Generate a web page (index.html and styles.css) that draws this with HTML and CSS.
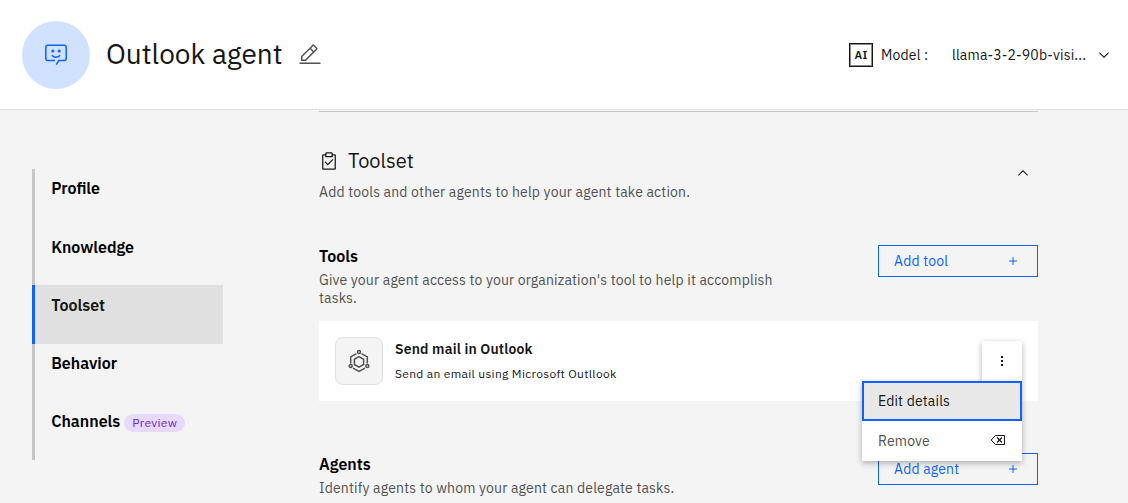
FILE: index.html
```html
<!DOCTYPE html>
<html lang="en">
<head>
<meta charset="utf-8">
<title>Outlook agent</title>
<link rel="stylesheet" href="styles.css">
</head>
<body>
<header class="header">
  <div class="avatar">
    <svg width="24" height="24" viewBox="0 0 24 24" fill="none" stroke="#0f62fe" stroke-width="1.5">
      <path d="M12.3 21.7L14.8 17.6H20.2Q22.2 17.6 22.2 15.6V4.2Q22.2 2.2 20.2 2.2H3.8Q1.8 2.2 1.8 4.2V15.6Q1.8 17.6 3.8 17.6H11"/>
      <path d="M7.9 12.3Q9.5 14.2 12 14.2T16.1 12.3"/>
      <circle cx="8.8" cy="7.9" r="1.5" fill="#0f62fe" stroke="none"/>
      <circle cx="15.2" cy="7.9" r="1.5" fill="#0f62fe" stroke="none"/>
    </svg>
  </div>
  <h1 class="title">Outlook agent</h1>
  <svg class="edit" width="24" height="24" viewBox="0 0 32 32" fill="#525252"><path d="M2 26h28v2H2zM25.4 9c.8-.8.8-2 0-2.8l-3.6-3.6c-.8-.8-2-.8-2.8 0l-15 15V24h6.4l15-15zM20.4 4L24 7.6l-3 3L17.4 7l3-3zM6 22v-3.6l10-10 3.6 3.6-10 10H6z"/></svg>
  <div class="model">
    <span class="ai">AI</span>
    <span class="model-label">Model :</span>
    <span class="model-name">llama-3-2-90b-visi...</span>
    <svg width="16" height="16" viewBox="0 0 16 16" fill="#161616"><path d="M8 11L3 6l.7-.7L8 9.6l4.3-4.3.7.7z"/></svg>
  </div>
</header>
<div class="layout">
  <nav class="nav">
    <a class="item">Profile</a>
    <a class="item">Knowledge</a>
    <a class="item active">Toolset</a>
    <a class="item">Behavior</a>
    <a class="item">Channels<span class="tag">Preview</span></a>
  </nav>
  <main class="main">
    <section class="intro">
      <div>
        <h2 class="heading">
          <svg width="20" height="20" viewBox="0 0 32 32" fill="#161616"><path d="M14 20.2l-3.6-3.6L9 18l5 5 9-9-1.4-1.4zM25 5h-3V4a2 2 0 0 0-2-2h-8a2 2 0 0 0-2 2v1H7a2 2 0 0 0-2 2v21a2 2 0 0 0 2 2h18a2 2 0 0 0 2-2V7a2 2 0 0 0-2-2zM12 4h8v4h-8zm13 24H7V7h3v3h12V7h3z"/></svg>
          <span>Toolset</span>
        </h2>
        <p class="desc">Add tools and other agents to help your agent take action.</p>
      </div>
      <svg class="collapse" width="16" height="16" viewBox="0 0 16 16" fill="#161616"><path d="M8 5l5 5-.7.7L8 6.4l-4.3 4.3L3 10z"/></svg>
    </section>
    <section class="group tools">
      <div>
        <h3 class="subhead">Tools</h3>
        <p class="desc">Give your agent access to your organization's tool to help it accomplish<br>tasks.</p>
      </div>
      <button class="add">Add tool<svg width="16" height="16" viewBox="0 0 32 32" fill="#0f62fe"><path d="M17 15V8h-2v7H8v2h7v7h2v-7h7v-2z"/></svg></button>
    </section>
    <article class="card">
      <div class="card-icon">
        <svg width="24" height="24" viewBox="0 0 24 24" fill="none" stroke="#525252" stroke-width="1.5">
          <path d="M12 7.7L16.6 10.3V15.500L12 18.100L7.400 15.500V10.300Z"/>
          <path d="M9.500 4.600L3.700 7.900V14.600M14.500 4.600L20.300 7.900V14.600M6 19.100L12 22.500L18 19.100"/>
          <circle cx="12" cy="3" r="1.500"/><circle cx="3.700" cy="17" r="1.500"/><circle cx="20.300" cy="17" r="1.500"/>
        </svg>
      </div>
      <div class="card-text">
        <h4 class="card-title">Send mail in Outlook</h4>
        <p class="card-desc">Send an email using Microsoft Outllook</p>
      </div>
      <div class="overflow">
        <svg width="16" height="16" viewBox="0 0 16 16" fill="#161616"><path d="M7 3h2v2H7zM7 7h2v2H7zM7 11h2v2H7z"/></svg>
        <div class="menu">
          <div class="option focused">Edit details</div>
          <div class="option">Remove
            <svg width="16" height="16" viewBox="0 0 16 16" fill="none" stroke="#161616"><path d="M5.5 2.500H14.500V11.500H5.500L1.200 7Z"/><path d="M7 4.500L12 9.500M12 4.500L7 9.500" stroke-width="1.200"/></svg>
          </div>
        </div>
      </div>
    </article>
    <section class="group agents">
      <div>
        <h3 class="subhead">Agents</h3>
        <p class="desc">Identify agents to whom your agent can delegate tasks.</p>
      </div>
      <button class="add">Add agent<svg width="16" height="16" viewBox="0 0 32 32" fill="#0f62fe"><path d="M17 15V8h-2v7H8v2h7v7h2v-7h7v-2z"/></svg></button>
    </section>
  </main>
</div>
</body>
</html>
```
FILE: styles.css
```css
* { box-sizing: border-box; margin: 0; padding: 0; }
body { width: 1128px; height: 503px; overflow: hidden; background: #f4f4f4; color: #161616; font: 14px/18px "IBM Plex Sans", Roboto, "Noto Sans", sans-serif; letter-spacing: .16px; }
svg { display: block; flex: none; }
.header { height: 110px; background: #fff; border-bottom: 1px solid #e0e0e0; display: flex; align-items: center; padding: 0 16px 0 22px; }
.avatar { width: 68px; height: 68px; border-radius: 50%; background: #d0e2ff; display: flex; align-items: center; justify-content: center; }
.title { font-size: 28px; line-height: 36px; font-weight: 400; width: 192px; margin: 0 0 1px 16px; letter-spacing: 0; white-space: nowrap; }
.model { margin-left: auto; display: flex; align-items: center; white-space: nowrap; }
.ai { width: 24px; height: 24px; border: 1px solid #161616; box-shadow: inset 0 0 0 1px #8b8b8b; font-weight: 600; font-size: 11.5px; line-height: 22px; letter-spacing: .3px; text-align: center; }
.model-label { width: 71px; margin-left: 8px; }
.model-name { width: 144px; }
.layout { display: flex; }
.nav { width: 191px; height: 291px; margin: 59px 0 0 32px; display: grid; grid-template-rows: repeat(5, 1fr); flex: none; }
.item { border-left: 3px solid #c6c6c6; padding: 9.4px 0 0 16.2px; font-size: 16px; line-height: 21px; font-weight: 600; letter-spacing: 0; color: #000; display: flex; align-items: flex-start; white-space: nowrap; }
.item.active { border-color: #0f62fe; background: #e0e0e0; color: #161616; }
.tag { width: 61px; height: 18px; margin: 3px 0 0 4px; border-radius: 9px; background: #e8daff; color: #6929c4; font-size: 12px; line-height: 18px; font-weight: 400; letter-spacing: .32px; text-align: center; }
.main { width: 719px; margin: 1px 0 0 96px; border-top: 1px solid #c6c6c6; }
.intro { display: flex; justify-content: space-between; padding: 36px 7px 0 0; height: 132px; }
.heading { display: flex; align-items: center; gap: 9px; font-size: 20px; line-height: 26px; font-weight: 400; letter-spacing: 0; }
.heading svg { margin-bottom: 1px; }
.intro .desc { margin-top: 9px; }
.collapse { margin-top: 17px; }
.desc { color: #525252; white-space: nowrap; }
.group { display: flex; justify-content: space-between; align-items: flex-start; }
.tools { height: 77px; }
.subhead { font-size: 16px; line-height: 22px; font-weight: 600; letter-spacing: 0; color: #000; margin: 1px 0 4px; }
.add { width: 160px; height: 32px; margin-top: 1px; padding: 0 16px 0 15px; background: transparent; border: 1px solid #0f62fe; color: #0f62fe; font: inherit; letter-spacing: inherit; display: flex; align-items: center; justify-content: space-between; }
.card { height: 80px; background: #fff; display: flex; padding: 16px; }
.card-icon { width: 48px; height: 48px; border: 1px solid #e0e0e0; border-radius: 8px; background: #f4f4f4; display: flex; align-items: center; justify-content: center; }
.card-text { margin: 3px 0 0 12px; white-space: nowrap; }
.card-title { font-size: 14px; line-height: 18px; font-weight: 600; }
.card-desc { font-size: 12px; line-height: 16px; margin-top: 8px; letter-spacing: .32px; }
.overflow { position: relative; width: 40px; height: 40px; margin: 4px 0 0 auto; background: #fff; box-shadow: 0 2px 6px rgba(0,0,0,.3); display: flex; align-items: center; justify-content: center; }
.menu { position: absolute; top: 40px; right: 0; width: 160px; background: #fff; box-shadow: 0 2px 6px rgba(0,0,0,.3); }
.option { height: 40px; padding: 0 16px; display: flex; align-items: center; justify-content: space-between; color: #525252; }
.focused { background: #e8e8e8; color: #161616; border: 2px solid #0f62fe; padding: 0 14px; }
.agents { padding-top: 51px; }
```
